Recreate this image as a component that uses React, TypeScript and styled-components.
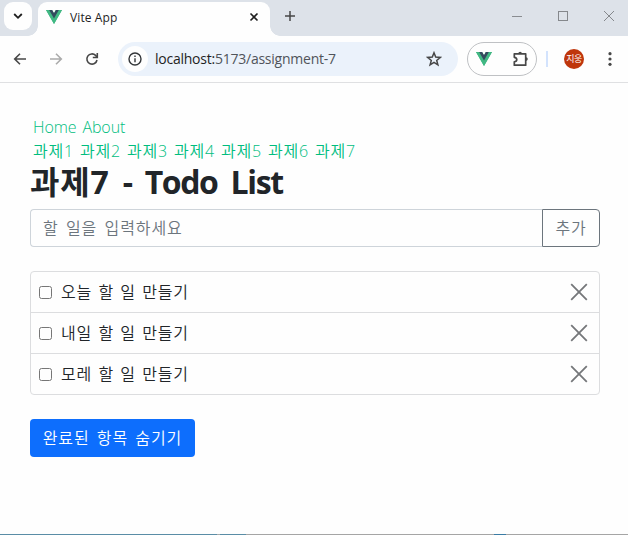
import React from "react";
import styled, { createGlobalStyle } from "styled-components";

const GlobalStyle = createGlobalStyle`
  * { box-sizing: border-box; }
  body { margin: 0; background: #fefefe; overflow: hidden; }
  button { font: inherit; margin: 0; }
`;

const Window = styled.div`
  width: 628px;
  height: 535px;
  display: flex;
  flex-direction: column;
  background: #fefefe;
  color: #212529;
  font-family: "Open Sans", "Noto Sans CJK KR", sans-serif;
`;

const TabStrip = styled.header`
  height: 36px;
  flex: none;
  display: flex;
  background: #dde2e9;
`;

const TabSearch = styled.div`
  width: 28px;
  height: 28px;
  margin: 2px 6px 0 4px;
  border-radius: 9px;
  background: #fefefe;
  display: flex;
  align-items: center;
  justify-content: center;
`;

const Tab = styled.div`
  position: relative;
  width: 232px;
  height: 34px;
  margin-top: 2px;
  padding: 0 11px 5px 8px;
  border-radius: 9px 9px 0 0;
  background: #fefefe;
  display: flex;
  align-items: center;
  &::before,
  &::after {
    content: "";
    position: absolute;
    bottom: 0;
    width: 10px;
    height: 10px;
  }
  &::before {
    left: -10px;
    background: radial-gradient(circle at 0 0, transparent 9.5px, #fefefe 10px);
  }
  &::after {
    right: -10px;
    background: radial-gradient(circle at 100% 0, transparent 9.5px, #fefefe 10px);
  }
`;

const TabTitle = styled.span`
  flex: 1;
  margin-left: 8px;
  padding-top: 2px;
  font-size: 12px;
  line-height: 16px;
  letter-spacing: 0.1px;
  color: #1f1f1f;
`;

const NewTab = styled.div`
  width: 16px;
  height: 32px;
  margin-left: 12px;
  display: flex;
  align-items: center;
  justify-content: center;
`;

const WindowControls = styled.div`
  height: 32px;
  margin-left: auto;
  padding-right: 13px;
  display: flex;
  align-items: center;
  gap: 34px;
`;

const Toolbar = styled.div`
  height: 47px;
  flex: none;
  padding: 0 8px 0 12px;
  display: flex;
  align-items: center;
  border-bottom: 1px solid #dfe0e2;
`;

const NavButtons = styled.div`
  display: flex;
  gap: 20px;
  width: 106px;
`;

const AddressBar = styled.div`
  width: 340px;
  height: 34px;
  padding: 0 16px 0 4px;
  border-radius: 17px;
  background: #ebf2fb;
  display: flex;
  align-items: center;
`;

const SiteInfo = styled.span`
  width: 26px;
  height: 26px;
  border-radius: 50%;
  background: #fefefe;
  display: flex;
  align-items: center;
  justify-content: center;
`;

const Url = styled.span`
  flex: 1;
  margin-left: 7px;
  font-size: 14px;
  line-height: 20px;
  letter-spacing: -0.24px;
  color: #1f1f1f;
`;

const UrlPath = styled.span`
  color: #50545a;
`;

const Extensions = styled.div`
  width: 70px;
  height: 34px;
  margin-left: 9px;
  padding: 0 6px 0 8px;
  border: 1px solid #bfc1c4;
  border-radius: 17px;
  display: flex;
  align-items: center;
  justify-content: space-between;
`;

const Separator = styled.i`
  width: 2px;
  height: 16px;
  margin-left: 9px;
  background: #d3e3fd;
`;

const Avatar = styled.span`
  width: 20px;
  height: 20px;
  margin-left: 16px;
  border-radius: 50%;
  background: #bf360c;
  color: #fff;
  font-size: 9px;
  line-height: 19px;
  text-align: center;
  letter-spacing: -0.5px;
`;

const MenuDots = styled.span`
  margin-left: auto;
  display: flex;
  padding-right: 2px;
`;

const Page = styled.main`
  flex: 1;
  padding: 32px 28px 0 30px;
  font-size: 16px;
  font-weight: 350;
  line-height: 24px;
`;

const NavRow = styled.nav<{ $spacing: number }>`
  display: flex;
  gap: 6px;
  padding-left: 3px;
  height: 24px;
  letter-spacing: ${(p) => p.$spacing}px;
`;

const NavLink = styled.a`
  color: #00bd7e;
  white-space: nowrap;
`;

const Title = styled.h1`
  margin: 0 0 8px;
  height: 38px;
  font-size: 32px;
  line-height: 38px;
  font-weight: 700;
  letter-spacing: -1.4px;
  word-spacing: 6.2px;
  white-space: nowrap;
`;

const TitleLead = styled.span`
  letter-spacing: 0.8px;
`;

const InputGroup = styled.form`
  display: flex;
  height: 38px;
  margin-bottom: 24px;
`;

const TodoInput = styled.input`
  flex: 1;
  min-width: 0;
  padding: 0 12px;
  border: 1px solid #ced4da;
  border-right: 0;
  border-radius: 4px 0 0 4px;
  background: #fefefe;
  font: inherit;
  letter-spacing: 0.9px;
  word-spacing: 2.3px;
  &::placeholder {
    color: #6c757d;
    opacity: 1;
  }
`;

const AddButton = styled.button`
  width: 58px;
  padding: 0;
  border: 1px solid #6c757d;
  border-radius: 0 4px 4px 0;
  background: #fefefe;
  color: #6c757d;
  letter-spacing: 0.8px;
`;

const TodoList = styled.ul`
  margin: 0 0 24px;
  padding: 0;
  list-style: none;
  border: 1px solid #dcdddf;
  border-radius: 4px;
`;

const TodoItem = styled.li`
  height: 40px;
  padding: 0 11px 0 8px;
  display: flex;
  align-items: center;
  & + & {
    height: 41px;
    border-top: 1px solid #dcdddf;
  }
`;

const Check = styled.input`
  appearance: none;
  width: 13px;
  height: 13px;
  margin: 0 9px 0 0;
  border: 1px solid #767676;
  border-radius: 2.5px;
  background: #fefefe;
`;

const TodoText = styled.span`
  flex: 1;
  letter-spacing: 0.8px;
  word-spacing: 1.4px;
`;

const RemoveButton = styled.button`
  display: flex;
  padding: 0;
  border: 0;
  background: none;
`;

const HideButton = styled.button`
  width: 165px;
  height: 38px;
  padding: 0;
  border: 0;
  border-radius: 4px;
  background: #0d6efd;
  color: #fff;
  letter-spacing: 0.9px;
  word-spacing: 2.2px;
`;

const DesktopEdge = styled.footer`
  height: 1px;
  flex: none;
  background: linear-gradient(
    90deg,
    #5a8da6 0 217px,
    #a5a9aa 217px 220px,
    #5a8da6 220px 246px,
    #a5a5a5 246px 494px,
    #3a7ca5 494px 506px,
    #a5a5a5 506px
  );
`;

const VueLogo = ({ size = 16 }: { size?: number }) => (
  <svg width={size} height={size * 0.875} viewBox="0 0 256 221">
    <path fill="#41b883" d="M204.8 0H256L128 220.8 0 0h97.92L128 51.2 157.44 0z" />
    <path fill="#41b883" d="m0 0 128 220.8L256 0h-51.2L128 132.48 50.56 0z" />
    <path fill="#35495e" d="M50.56 0 128 133.12 204.8 0h-47.36L128 51.2 97.92 0z" />
  </svg>
);

const Cross = () => (
  <svg width="18" height="18" viewBox="0 0 18 18" fill="none" stroke="#75777a" strokeWidth="1.8">
    <path d="M1.2 1.2l15.6 15.6M16.8 1.2L1.2 16.8" />
  </svg>
);

const assignments = [1, 2, 3, 4, 5, 6, 7];
const todos = ["오늘 할 일 만들기", "내일 할 일 만들기", "모레 할 일 만들기"];

export default function App() {
  return (
    <Window>
      <GlobalStyle />
      <TabStrip>
        <TabSearch>
          <svg width="10" height="8" viewBox="0 0 10 8" fill="none" stroke="#1f1f1f" strokeWidth="1.8">
            <path d="M1.2 2l3.8 3.8L8.8 2" />
          </svg>
        </TabSearch>
        <Tab>
          <VueLogo />
          <TabTitle>Vite App</TabTitle>
          <svg width="10" height="10" viewBox="0 0 10 10" stroke="#1f1f1f" strokeWidth="1.6">
            <path d="M1.5 1.5l7 7M8.5 1.5l-7 7" />
          </svg>
        </Tab>
        <NewTab>
          <svg width="10" height="10" viewBox="0 0 10 10" stroke="#474747" strokeWidth="1.5">
            <path d="M5 0v10M0 5h10" />
          </svg>
        </NewTab>
        <WindowControls>
          <svg width="12" height="12" viewBox="0 0 12 12" stroke="#8a8d91">
            <path d="M1 6.5h10" />
          </svg>
          <svg width="12" height="12" viewBox="0 0 12 12" fill="none" stroke="#85888c">
            <rect x="1.5" y="1.5" width="9" height="9" />
          </svg>
          <svg width="12" height="12" viewBox="0 0 12 12" stroke="#85888c">
            <path d="M1 1l10 10M11 1L1 11" />
          </svg>
        </WindowControls>
      </TabStrip>

      <Toolbar>
        <NavButtons>
          <svg width="16" height="16" viewBox="0 0 16 16" fill="none" stroke="#474747" strokeWidth="1.6">
            <path d="M14 8H3M8 2.7L2.7 8 8 13.3" />
          </svg>
          <svg width="16" height="16" viewBox="0 0 16 16" fill="none" stroke="#ababab" strokeWidth="1.6">
            <path d="M2 8h11M8 2.7L13.3 8 8 13.3" />
          </svg>
          <svg width="16" height="16" viewBox="0 0 16 16" fill="none" stroke="#474747" strokeWidth="1.6">
            <path d="M13 9a5.1 5.1 0 1 1-1.4-4.6L13 6" />
            <path d="M13.3 2v4.5H8.8" />
          </svg>
        </NavButtons>
        <AddressBar>
          <SiteInfo>
            <svg width="14" height="14" viewBox="0 0 14 14" fill="none" stroke="#333639" strokeWidth="1.4">
              <circle cx="7" cy="7" r="6" />
              <path d="M7 6.2v4M7 3.5v1.5" />
            </svg>
          </SiteInfo>
          <Url>
            localhost:<UrlPath>5173/assignment-7</UrlPath>
          </Url>
          <svg width="16" height="16" viewBox="0 0 16 16" fill="none" stroke="#474747" strokeWidth="1.5">
            <path d="M8 1.8l1.7 4.3 4.6.3-3.6 3 1.2 4.5L8 11.4l-3.9 2.5 1.2-4.5-3.6-3 4.6-.3z" />
          </svg>
        </AddressBar>
        <Extensions>
          <VueLogo />
          <svg width="18" height="18" viewBox="0 0 18 18" fill="none" stroke="#474747" strokeWidth="1.7">
            <path d="M2.3 3.8h11.4v11.4H2.3v-3.4c3.3-.4 3.3-4.1 0-4.5z" strokeLinejoin="round" />
            <path d="M6.3 3.5a1.8 1.8 0 0 1 3.6 0zM14 7.3a1.8 1.8 0 0 1 0 3.6z" fill="#474747" stroke="none" />
          </svg>
        </Extensions>
        <Separator />
        <Avatar>지웅</Avatar>
        <MenuDots>
          <svg width="16" height="16" viewBox="0 0 16 16" fill="#474747">
            <circle cx="8" cy="2.7" r="1.6" />
            <circle cx="8" cy="8" r="1.6" />
            <circle cx="8" cy="13.3" r="1.6" />
          </svg>
        </MenuDots>
      </Toolbar>

      <Page>
        <NavRow $spacing={-0.1}>
          <NavLink>Home</NavLink>
          <NavLink>About</NavLink>
        </NavRow>
        <NavRow $spacing={0.8}>
          {assignments.map((n) => (
            <NavLink key={n}>과제{n}</NavLink>
          ))}
        </NavRow>
        <Title>
          <TitleLead>과제7</TitleLead> - Todo List
        </Title>
        <InputGroup>
          <TodoInput placeholder="할 일을 입력하세요" />
          <AddButton type="button">추가</AddButton>
        </InputGroup>
        <TodoList>
          {todos.map((todo) => (
            <TodoItem key={todo}>
              <Check type="checkbox" />
              <TodoText>{todo}</TodoText>
              <RemoveButton>
                <Cross />
              </RemoveButton>
            </TodoItem>
          ))}
        </TodoList>
        <HideButton>완료된 항목 숨기기</HideButton>
      </Page>
      <DesktopEdge />
    </Window>
  );
}
